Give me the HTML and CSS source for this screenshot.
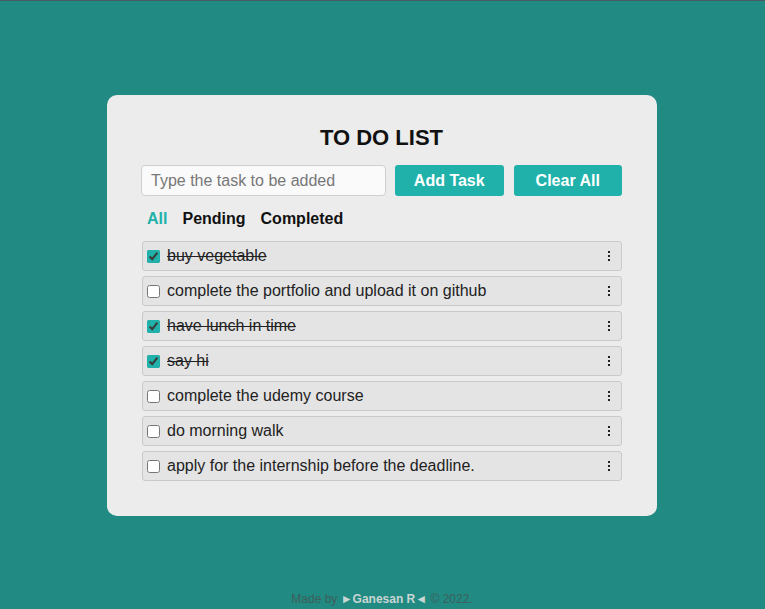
FILE: index.html
```html
<!DOCTYPE html>
<html>
<head>
<meta charset="utf-8">
<link rel="stylesheet" href="styles.css">
</head>
<body>
<main class="page">
  <section class="card">
    <h1 class="title">TO DO LIST</h1>
    <div class="add-row">
      <input class="task-input" type="text" placeholder="Type the task to be added">
      <button class="btn">Add Task</button>
      <button class="btn">Clear All</button>
    </div>
    <div class="filters">
      <span class="filter active">All</span>
      <span class="filter">Pending</span>
      <span class="filter">Completed</span>
    </div>
    <ul class="tasks">
      <li class="task done"><input type="checkbox" checked><span class="label">buy vegetable</span><svg class="menu" width="4" height="12" viewBox="0 0 4 12"><rect x="1" y="1" width="2" height="2"/><rect x="1" y="5" width="2" height="2"/><rect x="1" y="9" width="2" height="2"/></svg></li>
      <li class="task"><input type="checkbox"><span class="label">complete the portfolio and upload it on github</span><svg class="menu" width="4" height="12" viewBox="0 0 4 12"><rect x="1" y="1" width="2" height="2"/><rect x="1" y="5" width="2" height="2"/><rect x="1" y="9" width="2" height="2"/></svg></li>
      <li class="task done"><input type="checkbox" checked><span class="label">have lunch in time</span><svg class="menu" width="4" height="12" viewBox="0 0 4 12"><rect x="1" y="1" width="2" height="2"/><rect x="1" y="5" width="2" height="2"/><rect x="1" y="9" width="2" height="2"/></svg></li>
      <li class="task done"><input type="checkbox" checked><span class="label">say hi</span><svg class="menu" width="4" height="12" viewBox="0 0 4 12"><rect x="1" y="1" width="2" height="2"/><rect x="1" y="5" width="2" height="2"/><rect x="1" y="9" width="2" height="2"/></svg></li>
      <li class="task"><input type="checkbox"><span class="label">complete the udemy course</span><svg class="menu" width="4" height="12" viewBox="0 0 4 12"><rect x="1" y="1" width="2" height="2"/><rect x="1" y="5" width="2" height="2"/><rect x="1" y="9" width="2" height="2"/></svg></li>
      <li class="task"><input type="checkbox"><span class="label">do morning walk</span><svg class="menu" width="4" height="12" viewBox="0 0 4 12"><rect x="1" y="1" width="2" height="2"/><rect x="1" y="5" width="2" height="2"/><rect x="1" y="9" width="2" height="2"/></svg></li>
      <li class="task"><input type="checkbox"><span class="label">apply for the internship before the deadline.</span><svg class="menu" width="4" height="12" viewBox="0 0 4 12"><rect x="1" y="1" width="2" height="2"/><rect x="1" y="5" width="2" height="2"/><rect x="1" y="9" width="2" height="2"/></svg></li>
    </ul>
  </section>
  <footer class="footer">Made by <b class="author">►Ganesan R◄</b> © 2022.</footer>
</main>
</body>
</html>
```
FILE: styles.css
```css
html, body {
  margin: 0;
  padding: 0;
  height: 100%;
}
body {
  background: #218a82;
  border-top: 1px solid #4b5961;
  box-sizing: border-box;
  font-family: "Liberation Sans", Arial, sans-serif;
}
.page {
  min-height: 608px;
  display: flex;
  flex-direction: column;
  align-items: center;
  padding-right: 1px;
}
.card {
  width: 550px;
  box-sizing: border-box;
  margin-top: 94px;
  background: #ececec;
  border-radius: 10px;
  padding: 30px 35px 35px 34px;
}
.title {
  margin: 0 0 15px;
  text-align: center;
  font-size: 22px;
  line-height: 25px;
  font-weight: bold;
  color: #111;
}
.add-row {
  display: flex;
  align-items: center;
}
.task-input {
  width: 246px;
  height: 31px;
  box-sizing: border-box;
  border: 1px solid #cfcfcf;
  border-radius: 4px;
  background: #fafafa;
  padding: 0 9px;
  font-family: "Liberation Sans", Arial, sans-serif;
  font-size: 16px;
  color: #222;
  outline: none;
}
.task-input::placeholder {
  color: #777;
}
.btn {
  width: 109px;
  height: 31px;
  margin-left: 9px;
  border: none;
  border-radius: 3px;
  background: #20b2aa;
  color: #fff;
  font-family: "Liberation Sans", Arial, sans-serif;
  font-size: 16px;
  font-weight: bold;
  padding: 0;
}
.btn + .btn {
  margin-left: 10px;
}
.filters {
  display: flex;
  gap: 15px;
  padding-left: 6px;
  margin-top: 14px;
  font-size: 16px;
  line-height: 18px;
  font-weight: bold;
  color: #111;
}
.filter.active {
  color: #20b2aa;
}
.tasks {
  list-style: none;
  margin: 13px 0 0;
  padding: 0 0 0 1px;
  display: flex;
  flex-direction: column;
  gap: 5px;
}
.task {
  height: 30px;
  box-sizing: border-box;
  display: flex;
  align-items: center;
  background: #e4e4e4;
  border: 1px solid #c9c9c9;
  border-radius: 3px;
  padding: 0 10px 0 4px;
  font-size: 16px;
  color: #222;
}
.task input {
  width: 13px;
  height: 13px;
  margin: 0 7px 0 0;
  accent-color: #20b2aa;
}
.label {
  flex: 1;
}
.task.done .label {
  text-decoration: line-through;
}
.menu {
  fill: #222;
}
.footer {
  margin-top: auto;
  padding-bottom: 3px;
  font-size: 12px;
  line-height: 14px;
  color: #3d5f5c;
}
.author {
  color: #c8d6d4;
}
```
